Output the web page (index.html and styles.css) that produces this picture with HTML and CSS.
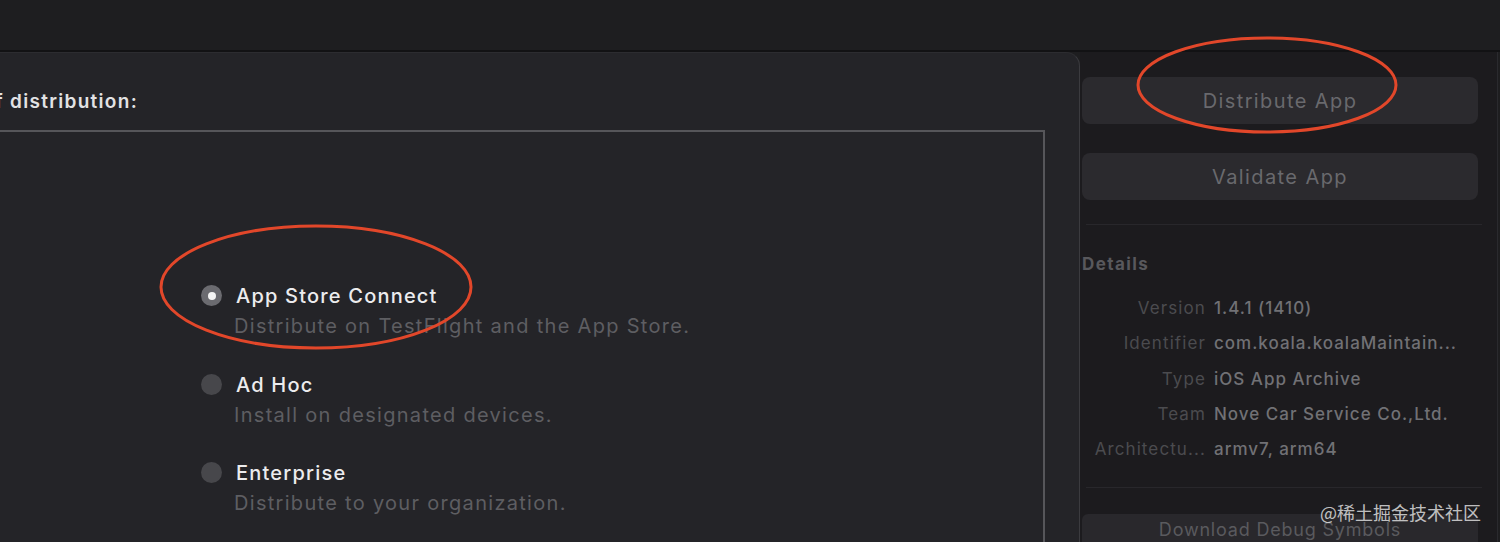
FILE: index.html
```html
<!DOCTYPE html>
<html>
<head>
<meta charset="utf-8">
<link rel="stylesheet" href="styles.css">
</head>
<body>
<div class="topbar"></div>
<div class="main">
  <section class="sheet">
    <div class="heading"><span>Select a method of distribution:</span></div>
    <div class="box">
      <ul class="options">
        <li class="option">
          <span class="radio on"></span>
          <div class="opt-text">
            <div class="opt-title">App Store Connect</div>
            <div class="opt-sub">Distribute on TestFlight and the App Store.</div>
          </div>
        </li>
        <li class="option">
          <span class="radio"></span>
          <div class="opt-text">
            <div class="opt-title">Ad Hoc</div>
            <div class="opt-sub">Install on designated devices.</div>
          </div>
        </li>
        <li class="option">
          <span class="radio"></span>
          <div class="opt-text">
            <div class="opt-title">Enterprise</div>
            <div class="opt-sub">Distribute to your organization.</div>
          </div>
        </li>
      </ul>
    </div>
  </section>
  <aside class="inspector">
    <button class="btn btn-first">Distribute App</button>
    <button class="btn btn-second">Validate App</button>
    <hr class="sep sep-top">
    <div class="details-title">Details</div>
    <dl class="details">
      <dt>Version</dt><dd>1.4.1 (1410)</dd>
      <dt>Identifier</dt><dd>com.koala.koalaMaintain...</dd>
      <dt>Type</dt><dd>iOS App Archive</dd>
      <dt>Team</dt><dd>Nove Car Service Co.,Ltd.</dd>
      <dt>Architectu...</dt><dd>armv7, arm64</dd>
    </dl>
    <hr class="sep sep-bottom">
    <button class="btn btn-debug">Download Debug Symbols</button>
  </aside>
</div>
<svg class="marks" width="1500" height="542" viewBox="0 0 1500 542">
  <ellipse cx="316" cy="287" rx="155" ry="61" fill="none" stroke="#e2472a" stroke-width="3"/>
  <ellipse cx="1267" cy="85" rx="129" ry="47" fill="none" stroke="#e2472a" stroke-width="3"/>
</svg>
<div class="watermark">@稀土掘金技术社区</div>
</body>
</html>
```

FILE: styles.css
```css
* { box-sizing: border-box; }
html, body {
  margin: 0;
  padding: 0;
  width: 1500px;
  height: 542px;
  overflow: hidden;
  background: #1e1e20;
  font-family: Inter, "Noto Sans", "Noto Sans CJK SC", sans-serif;
}
.topbar {
  height: 52px;
  background: #1e1e20;
  border-bottom: 2px solid #121214;
}
.main {
  display: flex;
  height: 490px;
}
.sheet {
  width: 1080px;
  flex: none;
  background: #242428;
  border-top-right-radius: 14px;
  border-right: 1px solid #3b3b3f;
  border-top: 1px solid #2c2c30;
  overflow: hidden;
}
.heading {
  width: 138px;
  display: flex;
  justify-content: flex-end;
  white-space: nowrap;
  margin-top: 37px;
  height: 24px;
  line-height: 24px;
  font-size: 19px;
  font-weight: 600;
  letter-spacing: 1.3px;
  color: #e2e2e4;
}
.box {
  margin-top: 16px;
  margin-left: -10px;
  width: 1055px;
  height: 420px;
  border: 2px solid #56565a;
  border-bottom: none;
}
.options {
  list-style: none;
  margin: 0;
  padding: 151px 0 0 209px;
}
.option {
  display: flex;
  align-items: flex-start;
  gap: 14px;
  height: 88.5px;
}
.radio {
  width: 21px;
  height: 21px;
  border-radius: 50%;
  background: #47474b;
  margin-top: 2px;
  flex: none;
  display: flex;
  align-items: center;
  justify-content: center;
}
.radio.on { background: #6b6b70; }
.radio.on::after {
  content: "";
  width: 8px;
  height: 8px;
  border-radius: 50%;
  background: #f4f4f4;
}
.opt-title {
  font-size: 20px;
  line-height: 26px;
  font-weight: 500;
  letter-spacing: 1.2px;
  color: #ececee;
}
.opt-sub {
  font-size: 20px;
  line-height: 35px;
  margin-left: -2px;
  letter-spacing: 1.3px;
  color: #5e5e62;
}
.inspector {
  flex: 1;
  background: #1c1b1e;
  padding: 25px 0 0 2px;
  display: flex;
  flex-direction: column;
  align-items: flex-start;
  border-right: 1px solid #2a2a2e;
  margin-right: 2px;
}
.btn {
  width: 396px;
  height: 47px;
  border: none;
  border-radius: 8px;
  background: #2b2a2e;
  color: #69696d;
  font-family: inherit;
  font-size: 20px;
  letter-spacing: 1.4px;
  padding: 0;
  flex: none;
}
.btn-second { margin-top: 29px; }
.sep {
  border: none;
  border-top: 1px solid #28272b;
  width: 396px;
  margin: 0 0 0 4px;
}
.sep-top { margin-top: 24px; }
.details-title {
  margin-top: 29px;
  font-size: 17px;
  line-height: 20px;
  font-weight: 700;
  letter-spacing: 1.4px;
  color: #58585c;
}
.details {
  margin: 17px 0 0;
  display: grid;
  grid-template-columns: 124px auto;
  column-gap: 8px;
  font-size: 17px;
  line-height: 35.3px;
}
.details dt {
  text-align: right;
  color: #4b4b4f;
  white-space: nowrap;
  letter-spacing: 1.1px;
}
.details dd {
  margin: 0;
  color: #717175;
  font-weight: 500;
  white-space: nowrap;
  letter-spacing: 1px;
}
.sep-bottom { margin-top: 20px; }
.btn-debug {
  margin-top: 26px;
  height: 32px;
  line-height: 32px;
  font-size: 18px;
  letter-spacing: 0.8px;
  padding-top: 0;
  border-radius: 6px 6px 0 0;
  background: #29282c;
  color: #5a5a5e;
}
.marks {
  position: absolute;
  left: 0;
  top: 0;
  pointer-events: none;
}
.watermark {
  position: absolute;
  left: 1320px;
  top: 499px;
  font-size: 18px;
  line-height: 26px;
  color: rgba(235, 235, 235, 0.8);
  font-family: "Noto Sans CJK SC", sans-serif;
}
```
